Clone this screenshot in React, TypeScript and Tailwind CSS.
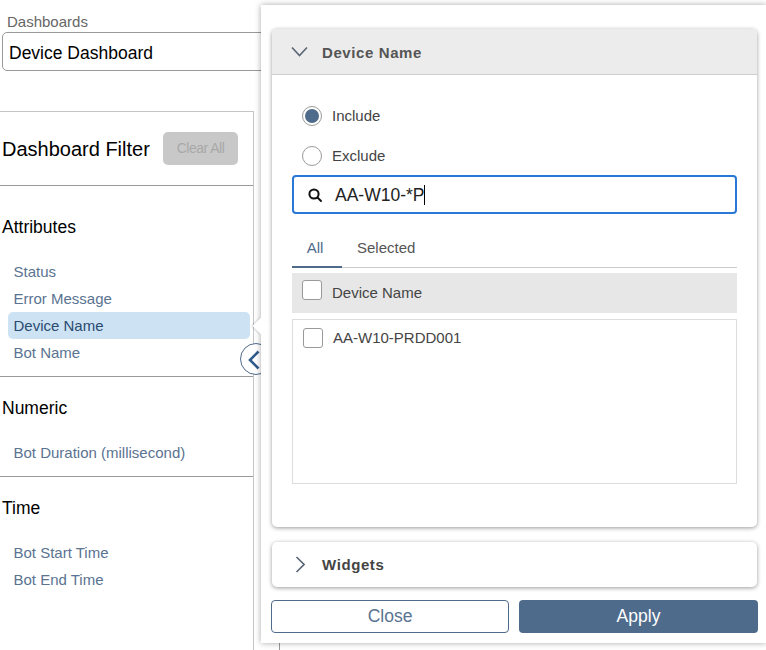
const font = "font-['Liberation_Sans',Arial,sans-serif]";

const Section = ({
  title,
  items,
  active,
  first,
  last,
}: {
  title: string;
  items: string[];
  active?: string;
  first?: boolean;
  last?: boolean;
}) => {
  return (
    <div className={(last ? "" : "border-b border-[#9a9a9a] ") + (first ? "pt-[10px]" : "")}>
      <div className="h-[62px] pt-[21px] pl-[2px] text-[17.5px] leading-[21px] text-black">{title}</div>
      <div className="pr-[3px] pb-[10px] pl-2">
        {items.map((item) => (
          <div
            key={item}
            className={
              "h-[27px] rounded-[5px] pl-[5.5px] text-[15px] leading-[27px] " +
              (item === active ? "bg-[#cde3f4] text-[#2b4a70]" : "text-[#5a7391]")
            }
          >
            {item}
          </div>
        ))}
      </div>
    </div>
  );
};

const Checkbox = ({ className = "" }: { className?: string }) => {
  return <span className={"block h-5 w-5 shrink-0 rounded-[3px] border border-[#999] bg-white " + className} />;
};

const Radio = ({ label, checked }: { label: string; checked?: boolean }) => {
  return (
    <div className="flex h-10 items-center gap-[10px] pl-[10px]">
      <span className="flex h-5 w-5 items-center justify-center rounded-full border border-[#999] bg-white">
        {checked && <span className="h-[14px] w-[14px] rounded-full bg-[#4f6b8c]" />}
      </span>
      <span className="text-[15px] text-[#444]">{label}</span>
    </div>
  );
};

const Sidebar = () => {
  return (
    <div className="w-[254px]">
      <div className="h-[32px] pt-[13px] pl-[7px] text-[15px] leading-[17px] text-[#666]">Dashboards</div>
      <div className="ml-[2px] h-[39px] w-[300px] rounded-[5px] border border-[#999] pl-[6px] text-[17.5px] leading-[41px] text-black">
        Device Dashboard
      </div>
      <div className="mt-[40px] h-[539px] border-t border-r border-[#c4c4c4]">
        <div className="flex h-[74px] items-center justify-between border-b border-[#9a9a9a] pr-[15px] pl-[2px]">
          <span className="text-[20px] text-black">Dashboard Filter</span>
          <button className="h-[33px] w-[75px] rounded-[5px] bg-[#c8c8c8] text-[14px] tracking-[-0.5px] text-[#a8a8a8]">
            Clear All
          </button>
        </div>
        <Section
          title="Attributes"
          items={["Status", "Error Message", "Device Name", "Bot Name"]}
          active="Device Name"
          first
        />
        <Section title="Numeric" items={["Bot Duration (millisecond)"]} />
        <Section title="Time" items={["Bot Start Time", "Bot End Time"]} last />
      </div>
    </div>
  );
};

const FilterPanel = () => {
  return (
    <div className="absolute top-[5px] left-[261px] flex h-[638px] w-[505px] flex-col bg-white pt-6 pr-2 pl-[10px] shadow-[0_0_6px_rgba(0,0,0,0.35)]">
      <div className="mr-[1px] ml-[1px] h-[498px] overflow-hidden rounded-[5px] bg-white shadow-[0_1px_4px_rgba(0,0,0,0.4)]">
        <div className="flex h-[46px] items-center gap-[14px] border-b border-[#cfcfcf] bg-[#ececec] pl-[19px]">
          <svg width="17" height="11" viewBox="0 0 17 11" fill="none" stroke="#5a6675" strokeWidth="1.6">
            <path d="M1 1.5 8.5 9.5 16 1.5" />
          </svg>
          <span className="pt-[3px] text-[15px] font-bold tracking-[0.6px] text-[#555]">Device Name</span>
        </div>
        <div className="px-5 pt-[21px]">
          <Radio label="Include" checked />
          <Radio label="Exclude" />
          <div className="-mt-[1px] flex h-[39px] items-center rounded-[4px] border-2 border-[#2a78d6] pl-[13px]">
            <svg width="16" height="16" viewBox="0 0 16 16" fill="none" stroke="#111" strokeWidth="2" strokeLinecap="round">
              <circle cx="7" cy="7" r="4.6" />
              <path d="M10.5 10.5 14 14" />
            </svg>
            <span className="ml-[12px] pt-[1px] text-[17.5px] text-[#222]">AA-W10-*P</span>
            <span className="h-[20px] w-px bg-black" />
          </div>
          <div className="mt-[14px] flex h-[40px] border-b border-[#ccc]">
            <div className="-mb-px w-[50px] border-b-2 border-[#4f6b8c] pt-[12px] pr-1 text-center text-[15px] leading-[16px] text-[#4f6b8c]">
              All
            </div>
            <div className="pt-[12px] pl-[15px] text-[15px] leading-[16px] text-[#555]">Selected</div>
          </div>
          <div className="mt-[5px] flex h-10 items-center gap-[10px] bg-[#e7e7e7] pl-[10px]">
            <Checkbox className="mb-[6px]" />
            <span className="pt-[1px] text-[15px] text-[#444]">Device Name</span>
          </div>
          <div className="mt-[6px] h-[165px] border border-[#ddd] pt-[8px] pl-[10px]">
            <div className="flex h-5 items-center gap-[10px]">
              <Checkbox />
              <span className="text-[15px] text-[#444]">AA-W10-PRDD001</span>
            </div>
          </div>
        </div>
      </div>
      <div className="mt-[15px] mr-[1px] ml-[1px] flex h-[45px] items-center gap-[17px] rounded-[5px] bg-white pl-[23px] shadow-[0_1px_4px_rgba(0,0,0,0.4)]">
        <svg width="10" height="17" viewBox="0 0 10 17" fill="none" stroke="#5a6675" strokeWidth="1.6">
          <path d="M1.5 1 9 8.5 1.5 16" />
        </svg>
        <span className="pt-[1px] text-[15px] font-bold tracking-[0.6px] text-[#444]">Widgets</span>
      </div>
      <div className="mt-[13px] flex gap-[10px]">
        <button className="h-[33px] w-[238px] rounded-[4px] border border-[#4f6b8c] bg-white text-[17.5px] text-[#5a7391]">
          Close
        </button>
        <button className="h-[33px] w-[239px] rounded-[4px] bg-[#4f6b8c] text-[17.5px] text-white">Apply</button>
      </div>
    </div>
  );
};

export default function App() {
  return (
    <div className={"relative h-[650px] w-[766px] overflow-hidden bg-white " + font}>
      <Sidebar />
      <div className="absolute top-[640px] left-[279px] h-[10px] w-px bg-[#999]" />
      <div className="absolute top-[343px] left-[240px] flex h-8 w-8 items-center justify-center rounded-full border border-[#4f6b8c] bg-white">
        <svg width="12" height="20" viewBox="0 0 12 20" fill="none" stroke="#2f5a8c" strokeWidth="2.6" className="-ml-[4px] mt-[2px]">
          <path d="M10.5 1.5 2 10l8.5 8.5" />
        </svg>
      </div>
      <FilterPanel />
      <div className="absolute top-[320px] left-[254px] h-[12px] w-[12px] translate-x-[1px] rotate-45 bg-white shadow-[-1px_1px_2px_rgba(0,0,0,0.15)]" />
    </div>
  );
}
